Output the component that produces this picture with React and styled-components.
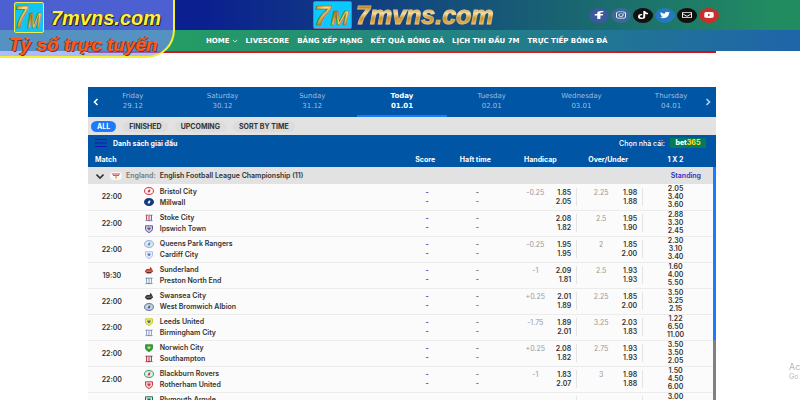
import styled, { createGlobalStyle } from 'styled-components';
import {
  FaFacebookF,
  FaInstagram,
  FaRegEnvelope,
  FaTiktok,
  FaTwitter,
  FaYoutube,
} from 'react-icons/fa';

const socials = [
  { name: 'Facebook', icon: FaFacebookF, color: '#3b5a9c' },
  { name: 'Instagram', icon: FaInstagram, color: '#3b6995' },
  { name: 'TikTok', icon: FaTiktok, color: '#111' },
  { name: 'Twitter', icon: FaTwitter, color: '#2478bc' },
  { name: 'Email', icon: FaRegEnvelope, color: '#111' },
  { name: 'YouTube', icon: FaYoutube, color: '#c8302a' },
];

const menu = [
  'LIVESCORE',
  'BẢNG XẾP HẠNG',
  'KẾT QUẢ BÓNG ĐÁ',
  'LỊCH THI ĐẤU 7M',
  'TRỰC TIẾP BÓNG ĐÁ',
];

const days = [
  ['Friday', '29.12'],
  ['Saturday', '30.12'],
  ['Sunday', '31.12'],
  ['Today', '01.01'],
  ['Tuesday', '02.01'],
  ['Wednesday', '03.01'],
  ['Thursday', '04.01'],
];

const filters = ['ALL', 'FINISHED', 'UPCOMING', 'SORT BY TIME'];

// crest: [shape, main colour, inner colour, mark colour]
const matches = [
  {
    time: '22:00',
    home: ['Bristol City', ['ring', '#d22630', '#fff', '#d22630']],
    away: ['Millwall', ['ring', '#123a7c', '#123a7c', '#fff']],
    handicap: ['-0.25', '1.85', '2.05'],
    total: ['2.25', '1.98', '1.88'],
    odds: ['2.05', '3.40', '3.60'],
  },
  {
    time: '22:00',
    home: ['Stoke City', ['stripes', '#d9485a', '#f3dfe6', '#5a6aa8']],
    away: ['Ipswich Town', ['shield', '#4a62ac', '#c9d4ee', '#b83a55']],
    handicap: ['', '2.08', '1.82'],
    total: ['2.5', '1.95', '1.90'],
    odds: ['2.88', '3.30', '2.45'],
  },
  {
    time: '22:00',
    home: ['Queens Park Rangers', ['ring', '#8fb1d8', '#dbe8f6', '#5d88bd']],
    away: ['Cardiff City', ['shield', '#a9bce6', '#eef2fc', '#5e78bc']],
    handicap: ['-0.25', '1.95', '1.95'],
    total: ['2', '1.85', '2.00'],
    odds: ['2.30', '3.10', '3.40'],
  },
  {
    time: '19:30',
    home: ['Sunderland', ['bird', '#c23a2c', '#e0a090', '#3a2a2a']],
    away: ['Preston North End', ['stripes', '#8fa9c8', '#eef3f8', '#56749a']],
    handicap: ['-1', '2.09', '1.81'],
    total: ['2.5', '1.93', '1.93'],
    odds: ['1.60', '4.00', '5.50'],
  },
  {
    time: '22:00',
    home: ['Swansea City', ['bird', '#333', '#999', '#111']],
    away: ['West Bromwich Albion', ['ring', '#5c6f9c', '#c9d3e6', '#4d6a58']],
    handicap: ['+0.25', '2.01', '1.89'],
    total: ['2.25', '1.85', '2.00'],
    odds: ['3.50', '3.25', '2.15'],
  },
  {
    time: '22:00',
    home: ['Leeds United', ['shield', '#c9cf2a', '#f0ec60', '#3a6ab0']],
    away: ['Birmingham City', ['stripes', '#9aa4c4', '#f2f4fa', '#6a78a4']],
    handicap: ['-1.75', '1.89', '2.01'],
    total: ['3.25', '2.03', '1.83'],
    odds: ['1.22', '6.50', '11.00'],
  },
  {
    time: '22:00',
    home: ['Norwich City', ['shield', '#2c9a48', '#2c9a48', '#e8dc38']],
    away: ['Southampton', ['stripes', '#c43c4c', '#f2dcdc', '#4c3a3a']],
    handicap: ['+0.25', '2.08', '1.82'],
    total: ['2.75', '1.93', '1.93'],
    odds: ['3.50', '3.50', '2.05'],
  },
  {
    time: '22:00',
    home: ['Blackburn Rovers', ['ring', '#2f9468', '#e4f2ea', '#c8303c']],
    away: ['Rotherham United', ['shield', '#cc3a48', '#f0d4d6', '#cc3a48']],
    handicap: ['-1', '1.83', '2.07'],
    total: ['3', '1.98', '1.88'],
    odds: ['1.50', '4.50', '6.00'],
  },
  {
    time: '',
    home: ['Plymouth Argyle', ['shield', '#1f6a50', '#dcebe4', '#1f6a50']],
    handicap: ['', '', ''],
    total: ['', '', ''],
    odds: ['3.00'],
  },
];

const GoldMark = ({ id, width, height }) => (
  <svg
    width={width}
    height={height}
    viewBox="0 0 42 32"
    preserveAspectRatio="none"
    overflow="visible"
    role="img"
    aria-label="7M"
  >
    <defs>
      <linearGradient id={id} x1="0" y1="0" x2="1" y2="1">
        <stop offset="0" stopColor="#8a6410" />
        <stop offset="0.3" stopColor="#f8e48a" />
        <stop offset="0.5" stopColor="#b07c18" />
        <stop offset="0.7" stopColor="#f6dc78" />
        <stop offset="1" stopColor="#86600c" />
      </linearGradient>
    </defs>
    <text
      x="0"
      y="28"
      fill={`url(#${id})`}
      stroke="#8a6410"
      strokeWidth="0.8"
      fontFamily="Liberation Sans, sans-serif"
      fontSize="35"
      fontStyle="italic"
      fontWeight="700"
    >
      7<tspan fontSize="25">M</tspan>
    </text>
  </svg>
);

const Crest = ({ crest: [shape, main, inner, mark] }) => (
  <svg width="10" height="8" viewBox="0 0 10 8" aria-hidden="true">
    {shape === 'ring' && (
      <>
        <ellipse cx="5" cy="4" rx="4.4" ry="3.4" fill={inner} stroke={main} />
        <path d="M3.4 5.2 5 2.6l1.6.2-1 2.6z" fill={mark} />
      </>
    )}
    {shape === 'shield' && (
      <>
        <path
          d="M1.5.8h7v3.4Q8.2 6.4 5 7.6 1.8 6.4 1.5 4.2z"
          fill={inner}
          stroke={main}
        />
        <path d="M3.4 2.4h3.2v1.4L5 5.6 3.4 3.8z" fill={mark} />
      </>
    )}
    {shape === 'stripes' && (
      <>
        <path d="M2 1h6v5L5 7.5 2 6z" fill={inner} />
        <path d="M2.5 1v5M5 2v5M7.5 1v5" stroke={main} />
        <path d="M1.5 1.2h7M1.5 6.6h7" stroke={mark} strokeWidth="0.8" />
      </>
    )}
    {shape === 'bird' && (
      <>
        <path d="M.8 5.2Q3 1.6 5.4 3.2L6.6.8l1 1.4 1.6 3.4-3 1.6H2.4z" fill={main} />
        <path d="M2.4 5.2h3.8l1.4-1" stroke={inner} strokeWidth="0.8" fill="none" />
        <path d="M3 6.8h4.4" stroke={mark} />
      </>
    )}
  </svg>
);

const Chevron = ({ d, size = 8, width = 1.6 }) => (
  <svg width={size} height={size} viewBox="0 0 8 8" aria-hidden="true">
    <path d={d} fill="none" stroke="currentColor" strokeWidth={width} />
  </svg>
);

const Line = ({ values: [line, first, second] }) => (
  <LineBox>
    <LineValue>{line}</LineValue>
    <OddsPair>
      <span>{first}</span>
      <span>{second}</span>
    </OddsPair>
  </LineBox>
);

const MatchRow = ({ match }) => (
  <MatchTr>
    <td>{match.time}</td>
    <td>
      {[match.home, match.away].map(
        (team, i) =>
          team ? (
            <Team key={i}>
              <Crest crest={team[1]} />
              {team[0]}
            </Team>
          ) : (
            <Team key={i} />
          )
      )}
    </td>
    <td>
      {match.away && (
        <Dashes $color="#2a2ac8">
          <span>-</span>
          <span>-</span>
        </Dashes>
      )}
    </td>
    <td>
      {match.away && (
        <Dashes $color="#555">
          <span>-</span>
          <span>-</span>
        </Dashes>
      )}
    </td>
    <td>
      <Line values={match.handicap} />
    </td>
    <td>
      <Line values={match.total} />
    </td>
    <td>
      <Prices>
        {match.odds.map((price, i) => (
          <span key={i}>{price}</span>
        ))}
      </Prices>
    </td>
  </MatchTr>
);

export default function App() {
  return (
    <>
      <GlobalStyle />
      <Header>
        <TopBar>
          <Brand href="#">
            <BrandMark>
              <GoldMark id="goldTop" width={36} height={26} />
            </BrandMark>
            <BrandName>7mvns.com</BrandName>
          </Brand>
          <Socials>
            {socials.map(({ name, icon: Icon, color }) => (
              <SocialLink key={name} href="#" aria-label={name} $color={color}>
                <Icon preserveAspectRatio="none" />
              </SocialLink>
            ))}
          </Socials>
        </TopBar>
        <Nav>
          <NavLink href="#">
            HOME
            <Chevron d="M1 2.5 4 5.5 7 2.5" size={6} width={1} />
          </NavLink>
          {menu.map(item => (
            <NavLink key={item} href="#">
              {item}
            </NavLink>
          ))}
        </Nav>
        <Banner href="#">
          <BannerTop>
            <BannerMark>
              <GoldMark id="goldBanner" width={27} height={29} />
            </BannerMark>
            <BannerName>7mvns.com</BannerName>
          </BannerTop>
          <Tagline>Tỷ số trực tuyến</Tagline>
        </Banner>
      </Header>

      <Main>
        <RedStrip />
        <DateBar>
          {days.map(([day, date]) => (
            <Day key={day} $active={day === 'Today'}>
              <span>{day}</span>
              <span>{date}</span>
            </Day>
          ))}
          <ArrowButton aria-label="Previous days" $side="left">
            <Chevron d="M5.5 1 2.5 4 5.5 7" />
          </ArrowButton>
          <ArrowButton aria-label="Next days" $side="right">
            <Chevron d="M2.5 1 5.5 4 2.5 7" />
          </ArrowButton>
        </DateBar>
        <FilterBar>
          {filters.map(item => (
            <Filter key={item} $active={item === 'ALL'}>
              {item}
            </Filter>
          ))}
        </FilterBar>
        <LeagueBar>
          <ListButton>
            <svg width="12" height="8" viewBox="0 0 12 8" aria-hidden="true">
              <path d="M0 .5h12M0 4h12M0 7.5h12" stroke="#1414b8" />
            </svg>
            Danh sách giải đấu
          </ListButton>
          <Bookmaker>
            Chọn nhà cái:
            <Bet365 href="#">
              bet<em>365</em>
            </Bet365>
          </Bookmaker>
        </LeagueBar>
        <Board>
          <Table>
            <colgroup>
              <Col $width="7.6%" />
              <Col />
              <Col $width="6.4%" />
              <Col $width="9.6%" />
              <Col $width="11.1%" />
              <Col $width="10.5%" />
              <Col $width="11.6%" />
            </colgroup>
            <thead>
              <HeadTr>
                <th colSpan={2}>Match</th>
                <th>Score</th>
                <th>Haft time</th>
                <th>Handicap</th>
                <th>Over/Under</th>
                <th>1 X 2</th>
              </HeadTr>
            </thead>
            <tbody>
              <LeagueTr>
                <td colSpan={7}>
                  <League>
                    <Chevron d="M.5 2.5 4 6 7.5 2.5" />
                    <Flag width="12" height="8" viewBox="0 0 12 8" aria-hidden="true">
                      <rect width="12" height="8" rx="4" fill="#f8f8f8" />
                      <path d="M2 2h8" stroke="#c8485a" />
                      <path d="M3 3.5h6" stroke="#6a78b8" />
                      <path d="M5.4 3.5h1.4v3H5.4z" fill="#e0923a" />
                    </Flag>
                    <Country>England:</Country>
                    <span>English Football League Championship (11)</span>
                    <StandingLink href="#">Standing</StandingLink>
                  </League>
                </td>
              </LeagueTr>
              {matches.map(match => (
                <MatchRow key={match.home[0]} match={match} />
              ))}
            </tbody>
          </Table>
          <ScrollTrack>
            <ScrollThumb />
          </ScrollTrack>
        </Board>
      </Main>

      <Watermark>
        <strong>Ac</strong>
        <span>Go</span>
      </Watermark>
    </>
  );
}

const GlobalStyle = createGlobalStyle`
  * {
    box-sizing: border-box;
  }

  html, body, #root {
    height: 100%;
  }

  body {
    margin: 0;
    overflow: hidden;
    background: #fff;
    color: #333;
    font-family: Inter, 'Noto Sans', sans-serif;
    font-size: 7px;
    line-height: 9px;
  }

  #root {
    overflow: hidden;
  }

  a {
    color: inherit;
    text-decoration: none;
  }

  button {
    padding: 0;
    border: 0;
    background: none;
    color: inherit;
    font: inherit;
    cursor: pointer;
  }

  svg {
    display: block;
    flex-shrink: 0;
  }
`;

const Header = styled.header`
  position: relative;
`;

const TopBar = styled.div`
  display: flex;
  justify-content: space-between;
  align-items: center;
  height: 30px;
  padding: 0 81px 0 313px;
  background: linear-gradient(90deg, #0b1f90 25%, #218c60 97%);
`;

const Brand = styled.a`
  display: flex;
  align-items: center;
  gap: 4px;
`;

const BrandMark = styled.span`
  width: 39px;
  height: 28px;
  border: 1px solid #8a6a9a;
  border-radius: 2px;
  background: #0cc8ff;
`;

const BrandName = styled.span`
  padding-right: 3px;
  background: linear-gradient(#c08a20 25%, #f8e0a0 45%, #c8902a 60%, #e8b858 85%);
  background-clip: text;
  color: transparent;
  font-family: 'Liberation Sans', sans-serif;
  font-size: 25px;
  font-style: italic;
  font-weight: 700;
  line-height: 30px;
  -webkit-text-stroke: 1px rgba(240, 220, 190, 0.4);
`;

const Socials = styled.div`
  display: flex;
  gap: 2px;
`;

const SocialLink = styled.a`
  display: flex;
  justify-content: center;
  align-items: center;
  width: 20px;
  height: 15px;
  border-radius: 50%;
  background: ${props => props.$color};
  color: #fff;

  svg {
    width: 10px;
    height: 8px;
  }
`;

const Nav = styled.nav`
  display: flex;
  align-items: center;
  gap: 8px;
  height: 21px;
  padding: 1px 0 0 206px;
  background: linear-gradient(90deg, #259c64 22%, #1f66a8 98%);
`;

const NavLink = styled.a`
  display: flex;
  align-items: center;
  gap: 2px;
  color: #fff;
  font-family: 'DejaVu Sans', sans-serif;
  font-weight: 700;
  white-space: nowrap;
`;

const Banner = styled.a`
  position: absolute;
  top: 0;
  left: 0;
  z-index: 1;
  width: 175px;
  height: 58px;
  padding: 2px 0 0 9px;
  border: solid #f4f032;
  border-width: 0 2px 2px 0;
  border-radius: 0 0 28px 0;
  background: rgba(120, 140, 255, 0.6);
`;

const BannerTop = styled.div`
  display: flex;
  align-items: center;
  gap: 7px;
  padding-left: 5px;
`;

const BannerMark = styled.span`
  width: 30px;
  height: 31px;
  border: 1px solid #f0f04a;
  border-radius: 2px;
  background: #10c4f4;
`;

const BannerName = styled.span`
  color: #fff03a;
  font-family: 'Liberation Sans', sans-serif;
  font-size: 20px;
  font-style: italic;
  font-weight: 700;
  line-height: 30px;
  text-shadow: 1px 1px 0 #222, -1px 0 0 #333;
`;

const Tagline = styled.div`
  color: #ff5a14;
  font-family: 'Liberation Sans', sans-serif;
  font-size: 19px;
  font-style: italic;
  font-weight: 700;
  line-height: 23px;
  white-space: nowrap;
  text-shadow: 1px 1px 0 #5a3a4a, -1px 0 0 #6a4a5a;
`;

const Main = styled.main`
  margin: 0 84px 0 88px;
`;

const RedStrip = styled.div`
  height: 2px;
  margin-bottom: 34px;
  background: linear-gradient(90deg, #cc1428, #dc241c 60%, #cc1018);
`;

const DateBar = styled.div`
  position: relative;
  display: grid;
  grid-template-columns: repeat(7, 1fr);
  height: 30px;
  background: #0055a4;
`;

const Day = styled.button`
  display: flex;
  flex-direction: column;
  align-items: center;
  padding-top: 4px;
  border-bottom: 2px solid ${props => (props.$active ? '#1a7bff' : '#0055a4')};
  color: ${props => (props.$active ? '#fff' : '#9dbfe0')};
  font-family: 'DejaVu Sans', sans-serif;
  font-weight: ${props => (props.$active ? 700 : 400)};
  line-height: 10px;
`;

const ArrowButton = styled.button`
  position: absolute;
  top: 11px;
  ${props => props.$side}: 4px;
  color: ${props => (props.$side === 'left' ? '#fff' : '#b8d0ea')};
`;

const FilterBar = styled.div`
  display: flex;
  align-items: center;
  gap: 7px;
  height: 18px;
  padding: 0 3px;
  background: #e2e2e2;
`;

const Filter = styled.button`
  height: 11px;
  padding: 0 6px;
  border-radius: 6px;
  background: ${props => (props.$active ? '#1a7bff' : '#dcdcdc')};
  color: ${props => (props.$active ? '#fff' : '#333')};
  font-weight: 700;
`;

const LeagueBar = styled.div`
  display: flex;
  justify-content: space-between;
  align-items: center;
  height: 16px;
  padding: 0 10px 0 7px;
  background: #0055a4;
  color: #fff;
`;

const ListButton = styled.button`
  display: flex;
  align-items: center;
  gap: 6px;
  font-weight: 700;
`;

const Bookmaker = styled.div`
  display: flex;
  align-items: center;
  gap: 5px;
  font-weight: 500;
`;

const Bet365 = styled.a`
  width: 36px;
  background: #027b5b;
  font-weight: 800;
  line-height: 10px;
  text-align: center;

  em {
    color: #f9dc1c;
    font-style: normal;
  }
`;

const Board = styled.div`
  position: relative;
`;

const Table = styled.table`
  width: 100%;
  table-layout: fixed;
  border-collapse: collapse;

  th,
  td {
    padding: 0;
  }
`;

const Col = styled.col`
  width: ${props => props.$width || 'auto'};
`;

const HeadTr = styled.tr`
  height: 16px;
  background: #0055a4;
  color: #fff;

  th {
    padding-right: 4px;
    font-weight: 700;
    text-align: center;
    white-space: nowrap;
  }

  th:first-child {
    padding-left: 7px;
    text-align: left;
  }

  th:last-child {
    padding-right: 8px;
  }
`;

const LeagueTr = styled.tr`
  height: 17px;
  background: #e2e2e2;
  font-weight: 600;
`;

const League = styled.div`
  display: flex;
  align-items: center;
  padding: 0 15px 0 8px;
`;

const Flag = styled.svg`
  margin: 0 4px 0 6px;
`;

const Country = styled.span`
  margin-right: 4px;
  color: #777;
`;

const StandingLink = styled.a`
  margin-left: auto;
  color: #2f2fc0;
`;

const MatchTr = styled.tr`
  height: 26px;
  border-bottom: 1px solid #ececec;
  background: #fbfbfb;
  font-weight: 600;
  text-align: center;
`;

const Team = styled.div`
  display: flex;
  align-items: center;
  gap: 6px;
  height: 11px;
  padding-left: 8px;
`;

const Dashes = styled.div`
  display: flex;
  flex-direction: column;
  color: ${props => props.$color};
`;

const LineBox = styled.div`
  display: flex;
  justify-content: flex-end;
  gap: 6px;
  height: 18px;
  padding-right: 5px;
  border-right: 1px solid #e4e4e4;
`;

const LineValue = styled.span`
  width: 24px;
  color: #999;
  font-weight: 400;
`;

const OddsPair = styled.div`
  display: flex;
  flex-direction: column;
  width: 18px;
  text-align: right;
`;

const Prices = styled.div`
  display: flex;
  flex-direction: column;
  height: 24px;
  padding-right: 8px;
  line-height: 8px;
`;

const ScrollTrack = styled.div`
  position: absolute;
  top: 16px;
  right: 0;
  bottom: 0;
  width: 3px;
  background: #808080;
`;

const ScrollThumb = styled.div`
  height: 173px;
  background: #1a7bff;
`;

const Watermark = styled.div`
  position: fixed;
  right: 0;
  bottom: 19px;
  display: flex;
  flex-direction: column;
  width: 11px;
  color: #b4b4b4;

  strong {
    font-size: 9px;
    font-weight: 400;
    line-height: 11px;
  }
`;
